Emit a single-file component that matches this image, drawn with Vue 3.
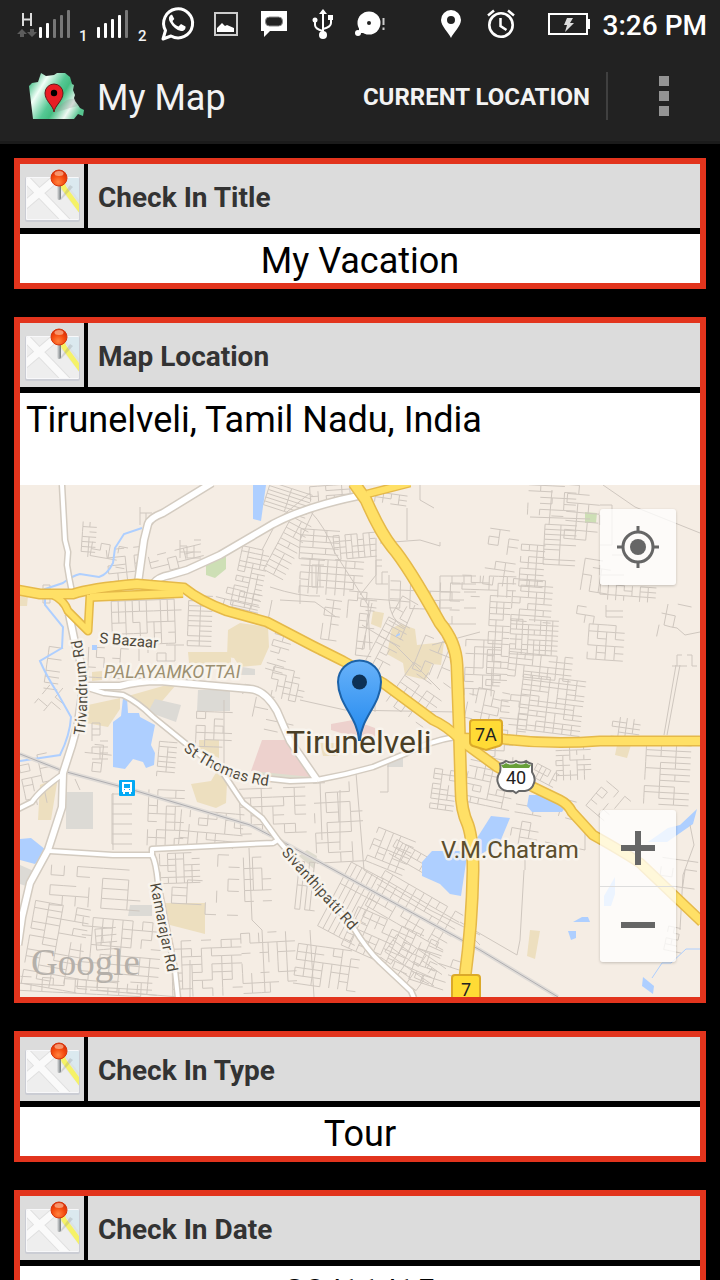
<script setup>
import { ref } from 'vue'

const records = ref([
  { title: 'Check In Title', value: 'My Vacation' },
  { title: 'Map Location', value: 'Tirunelveli, Tamil Nadu, India', map: true },
  { title: 'Check In Type', value: 'Tour' },
  { title: 'Check In Date', value: '28/11/15' }
])

// Minor street blocks: [x, y, width, height, rotation, column step, row step, density]
const blocks = [
  [82, 522, 16, 34, 4, 7, 5, 0.6], [90, 545, 40, 26, 10, 9, 7, 0.4], [140, 507, 12, 22, 0, 6, 6, 0.6],
  [108, 548, 38, 34, -6, 9, 8, 0.5], [150, 550, 55, 20, -14, 9, 6, 0.55], [180, 540, 22, 20, 0, 7, 6, 0.5],
  [112, 600, 75, 50, -2, 7, 11, 0.7], [188, 596, 24, 52, 2, 12, 5, 0.85], [130, 645, 60, 22, 0, 9, 8, 0.5],
  [236, 548, 28, 62, 12, 7, 5, 0.75], [216, 590, 44, 18, 14, 9, 6, 0.6], [46, 648, 26, 46, 8, 14, 6, 0.65],
  [36, 585, 22, 18, 0, 7, 6, 0.4], [92, 723, 18, 38, 0, 8, 6, 0.6], [40, 684, 24, 34, 40, 12, 6, 0.4],
  [88, 648, 40, 30, 3, 8, 10, 0.5], [196, 712, 40, 40, 2, 9, 7, 0.55], [158, 742, 18, 34, 5, 9, 5, 0.8],
  [266, 488, 44, 24, 18, 22, 4, 0.9], [310, 485, 50, 14, -4, 8, 5, 0.6], [276, 520, 30, 60, 28, 11, 6, 0.75],
  [300, 530, 38, 30, 4, 13, 6, 0.85], [334, 534, 42, 25, -5, 6, 6, 0.75], [300, 560, 62, 34, 4, 9, 7, 0.8],
  [312, 565, 14, 22, 0, 4, 22, 1], [322, 600, 16, 58, 8, 8, 8, 0.7], [348, 592, 26, 26, 5, 9, 9, 0.5],
  [358, 600, 16, 60, 6, 8, 7, 0.65], [373, 620, 28, 60, 28, 8, 7, 0.65], [390, 582, 70, 34, 2, 10, 9, 0.5],
  [440, 576, 42, 48, 0, 12, 8, 0.55], [376, 560, 12, 24, 0, 6, 6, 0.5], [394, 600, 24, 28, 30, 9, 7, 0.5],
  [270, 630, 22, 46, 16, 9, 6, 0.5], [270, 670, 36, 34, 12, 7, 6, 0.6], [395, 672, 50, 50, 35, 9, 8, 0.5],
  [416, 640, 35, 45, 22, 9, 12, 0.35], [375, 494, 34, 10, 8, 8, 5, 0.6], [240, 690, 60, 40, 12, 14, 10, 0.3],
  [528, 486, 52, 34, 3, 12, 6, 0.4], [566, 486, 38, 56, 5, 11, 9, 0.45], [486, 530, 30, 60, 8, 10, 8, 0.4],
  [544, 525, 32, 40, 3, 16, 5, 0.8], [520, 545, 28, 45, 4, 8, 6, 0.75], [462, 576, 54, 24, 2, 9, 7, 0.55],
  [488, 596, 20, 90, 3, 7, 6, 0.75], [512, 580, 44, 44, 4, 8, 6, 0.7], [510, 620, 48, 36, 3, 6, 5, 0.75],
  [465, 640, 38, 55, 2, 9, 7, 0.6], [508, 655, 70, 26, 6, 8, 6, 0.75], [520, 678, 66, 56, 7, 9, 5, 0.8],
  [588, 625, 36, 36, 4, 9, 7, 0.7], [580, 560, 28, 65, 9, 9, 8, 0.35], [600, 586, 55, 14, 4, 8, 5, 0.7],
  [606, 605, 18, 14, 0, 17, 6, 0.9], [612, 718, 28, 20, 8, 7, 5, 0.65], [466, 690, 44, 44, 12, 8, 8, 0.55],
  [500, 695, 30, 45, 5, 9, 6, 0.6], [672, 655, 28, 11, 0, 5, 11, 0.6], [660, 605, 40, 35, 12, 14, 12, 0.25],
  [22, 755, 34, 48, -12, 10, 7, 0.55], [84, 745, 32, 30, 6, 9, 9, 0.4], [112, 794, 34, 60, 0, 20, 10, 0.8],
  [148, 790, 38, 55, 2, 9, 8, 0.65], [180, 812, 62, 34, 5, 9, 7, 0.65], [160, 853, 42, 34, -2, 8, 6, 0.65],
  [50, 868, 96, 44, 4, 13, 10, 0.55], [28, 905, 60, 84, 10, 14, 7, 0.7], [80, 920, 80, 74, 5, 10, 9, 0.65],
  [96, 928, 26, 26, -5, 7, 7, 0.7], [172, 940, 76, 55, -2, 10, 8, 0.6], [172, 880, 34, 24, 3, 15, 8, 0.6],
  [206, 855, 40, 60, 2, 11, 12, 0.3], [20, 980, 140, 16, 3, 11, 7, 0.65], [240, 788, 72, 50, -2, 11, 9, 0.6],
  [315, 782, 48, 80, -3, 12, 10, 0.6], [244, 846, 34, 60, -2, 9, 11, 0.5], [296, 862, 22, 70, 6, 5, 24, 0.85],
  [330, 868, 45, 80, 28, 6, 24, 0.8], [370, 834, 44, 38, 22, 8, 6, 0.7], [386, 858, 80, 22, 30, 7, 8, 0.7],
  [368, 890, 90, 45, 30, 9, 8, 0.8], [345, 925, 100, 44, 24, 8, 7, 0.65], [380, 948, 60, 40, 35, 12, 7, 0.55],
  [242, 932, 60, 60, -3, 9, 10, 0.45], [295, 948, 70, 46, 8, 9, 8, 0.6], [432, 770, 28, 40, 8, 8, 5, 0.65],
  [412, 955, 48, 36, 18, 12, 8, 0.45], [466, 758, 48, 52, 12, 8, 6, 0.65], [556, 745, 38, 34, -2, 7, 5, 0.7],
  [590, 788, 36, 38, 40, 8, 8, 0.6], [645, 745, 55, 60, 3, 15, 6, 0.75], [512, 806, 28, 44, 10, 9, 8, 0.5],
  [666, 928, 22, 24, 12, 6, 6, 0.6], [660, 860, 40, 34, 8, 12, 9, 0.4], [532, 768, 24, 18, 28, 5, 7, 0.7],
  [560, 800, 14, 22, 15, 7, 6, 0.5], [486, 745, 40, 20, 2, 9, 6, 0.4], [600, 505, 24, 70, 0, 12, 10, 0.2]
]

function streetPath([x, y, w, h, deg, sx, sy, density], index) {
  let seed = index * 7919 + 17
  const rand = () => {
    seed = (seed * 16807 + 11) % 2147483647
    return seed / 2147483647
  }
  for (let i = 0; i < 4; i++) rand()
  const fill = density + 0.08
  const a = (deg * Math.PI) / 180
  const cx = x + w / 2
  const cy = y + h / 2
  const pt = (px, py) => {
    const dx = px - cx
    const dy = py - cy
    return `${(cx + dx * Math.cos(a) - dy * Math.sin(a)).toFixed(1)} ${(cy + dx * Math.sin(a) + dy * Math.cos(a)).toFixed(1)}`
  }
  let d = ''
  for (let py = y; py <= y + h; py += sy) {
    for (let px = x; px + sx <= x + w + 1; px += sx) {
      if (rand() < fill) d += `M${pt(px, py)}L${pt(px + sx, py)}`
      if (py + sy <= y + h + 1 && rand() < fill) d += `M${pt(px, py)}L${pt(px, py + sy)}`
    }
  }
  return d
}

const minorStreets = blocks.map(streetPath).join('')

const whiteRoads = [
  { w: 4, d: 'M62 485L65 540L68 552L67 565L69 577L72 592' },
  { w: 6, d: 'M69 614L75 643L82 667L83 687L78 723L72 745L63 773L62 807L48 850L30 883L22 917L18 945' },
  { w: 6, d: 'M212 483L163 513Q150 518 148 524L144 540L138 583' },
  { w: 6, d: 'M153 584Q158 577 170 575L187 570L220 555L273 524Q305 507 358 496' },
  { w: 6, d: 'M86 686L120 686Q138 681 160 681L193 684L250 689Q265 690 277 711L290 741L317 780' },
  { w: 4, d: 'M317 780Q345 775 373 767L407 753Q430 741 455 737' },
  { w: 4, d: 'M317 780L290 781L262 778' },
  { w: 4, d: 'M88 688L104 693L123 695Q138 702 153 717L190 747L223 773L243 803L262 818L278 840L353 927Q367 950 380 962L411 991L414 998' },
  { w: 4, d: 'M50 851L113 855L152 855L152 849L250 844L273 843L278 840' },
  { w: 4, d: 'M152 855Q156 862 158 883L175 970L178 998' },
  { w: 4, d: 'M18 809L32 802Q40 790 63 774' }
]

const yellowRoads = [
  { w: 7, d: 'M90 597L183 593' },
  { w: 6, d: 'M53 595Q64 600 68 611L88 631L90 595' },
  { w: 8, d: 'M18 590L40 594L73 594Q90 588 137 584L184 588Q200 601 227 611L267 622L313 646L343 661L383 683L433 720Q445 725 460 739' },
  { w: 6, d: 'M367 494L410 483' },
  { w: 10, d: 'M354 483L366 500Q380 532 392 547Q407 564 440 623Q456 642 457 665L459 720L461 790Q461 810 468 825Q473 840 473 870Q472 925 465 977' },
  { w: 8, d: 'M460 738L503 739Q550 745 600 741L702 741' },
  { w: 8, d: 'M460 740L497 767L533 787L560 800Q568 804 572 812L593 835Q620 850 640 863L702 922' }
]
</script>

<template>
  <div class="app">
    <header class="top">
      <div class="status">
        <div class="signal">
          <svg width="54" height="30" viewBox="16 9 54 30">
            <g fill="#5c5c5c"><path d="M17 34l5-5 5 5h-3v3h-4v-3zM27 32l5 5 5-5h-3v-3h-4v3z" /></g>
            <path d="M23 13v13M31 13v13M23 19.500h8" stroke="#ddd" stroke-width="2" fill="none" />
            <g fill="#fff"><rect x="39" y="27" width="3" height="11" rx="1" /><rect x="46" y="23" width="3" height="15" rx="1" /></g>
            <g fill="#777"><rect x="53" y="19" width="3" height="19" rx="1" /><rect x="60" y="15" width="3" height="23" rx="1" /><rect x="67" y="10" width="3" height="28" rx="1" /></g>
          </svg>
          <span class="sim">1</span>
          <svg width="32" height="30" viewBox="97 9 32 30">
            <g fill="#fff"><rect x="97" y="27" width="3" height="11" rx="1" /><rect x="104" y="23" width="3" height="15" rx="1" /><rect x="111" y="19" width="3" height="19" rx="1" /><rect x="118" y="15" width="3" height="23" rx="1" /></g>
            <rect x="125" y="10" width="3" height="28" rx="1" fill="#777" />
          </svg>
          <span class="sim">2</span>
        </div>
        <div class="notices">
          <svg width="48" height="48" viewBox="155 1 48 48">
            <path d="M164 40l2.500-8.500a14.500 14.500 0 1 1 5.500 5.500z" fill="none" stroke="#fff" stroke-width="3" stroke-linejoin="round" />
            <path d="M173 15.500c-3 1-4 4-2 7.500 3 5 6.500 8 11 9 2.500.500 5-1.500 4.500-4.500l-4.500-2.500-2.500 2.500c-3-1-5-3.200-6-5.500l1.800-2z" fill="#fff" />
          </svg>
          <svg width="48" height="48" viewBox="202 0 48 48">
            <rect x="215" y="13" width="22" height="22" fill="none" stroke="#ccc" stroke-width="2" />
            <path d="M217 32v-4l5-5 3 3 2-1 7 3v4z" fill="#fff" />
          </svg>
          <svg width="48" height="48" viewBox="250 0 48 48">
            <path d="M261 11h26v20h-17l-6 6v-6h-3z" fill="#fff" /><rect x="265.500" y="17" width="17" height="9" rx="4" fill="#222" stroke="#888" />
          </svg>
          <svg width="48" height="48" viewBox="298 0 48 48">
            <path d="M323 13v22M315 21v4q0 4 8 6M331 19v4q0 4-8 6" fill="none" stroke="#fff" stroke-width="2" />
            <path d="M319 14l4-5 4 5z" fill="#fff" /><circle cx="323" cy="35" r="4" fill="#fff" /><circle cx="315" cy="20" r="2.500" fill="#fff" /><rect x="328" y="15" width="5" height="5" fill="#fff" />
          </svg>
          <svg width="48" height="48" viewBox="346 0 48 48">
            <circle cx="369" cy="23" r="11.500" fill="#fff" /><circle cx="369" cy="23" r="2" fill="#222" />
            <path d="M360 27v5h7" fill="none" stroke="#fff" stroke-width="2" /><circle cx="358" cy="33" r="3" fill="#fff" />
            <path d="M383.500 18v7M383.500 27.500v2.500" stroke="#ccc" stroke-width="2" />
          </svg>
        </div>
        <div class="system">
          <svg width="48" height="48" viewBox="429 0 48 48">
            <path fill-rule="evenodd" d="M451 38c-2-5-10-12-10-18a10 10 0 0 1 20 0c0 6-8 13-10 18zM451 16a4 4 0 1 0 0 8 4 4 0 0 0 0-8z" fill="#fff" />
          </svg>
          <svg width="48" height="48" viewBox="477 0 48 48">
            <circle cx="501" cy="25" r="11.700" fill="none" stroke="#fff" stroke-width="2.600" />
            <path d="M500.500 18v8l6 4M488 15.500l6-5M514 15.500l-6-5" fill="none" stroke="#fff" stroke-width="2.500" />
          </svg>
          <svg class="battery" width="42" height="48" viewBox="548 0 42 48">
            <rect x="549" y="14" width="38" height="20" fill="none" stroke="#fff" stroke-width="2" /><path d="M588 19h2v10h-2z" fill="#fff" />
            <path d="M567 18h6l-3 5h4l-9 9 2-7h-3z" fill="#ddd" />
          </svg>
          <time class="clock">3:26 PM</time>
        </div>
      </div>

      <div class="actionbar">
        <svg class="logo" width="56" height="50" viewBox="28 71 56 50">
          <defs>
            <linearGradient id="land" x1="0" y1="0.200" x2="1" y2="0.700">
              <stop offset="0" stop-color="#3fbd83" /><stop offset="0.220" stop-color="#f2fff8" /><stop offset="0.480" stop-color="#55c894" /><stop offset="0.600" stop-color="#43bd82" /><stop offset="0.820" stop-color="#eef8f2" /><stop offset="1" stop-color="#57c590" />
            </linearGradient>
          </defs>
          <path d="M29 86l3-3 6-1 3-9 5 3 8-1 3-2 8 0 5 4 2 7 2 1-1 5 2 5-1 3 1 3 3 4 2 3 4 2-1 6-5-2-4 5H33z" fill="url(#land)" />
          <path d="M54 113c9-13 16-15 21-14l3 7-8 2z" fill="#888" opacity="0.250" />
          <path d="M54 112c-1-7-9-11-9-19a9 9 0 0 1 18 0c0 8-8 12-9 19z" fill="#e91d25" stroke="#6b1518" stroke-width="1" /><circle cx="54" cy="93" r="3.200" />
        </svg>
        <h1>My Map</h1>
        <button class="current" type="button">CURRENT LOCATION</button>
        <button class="more" type="button" aria-label="More options">
          <svg width="10" height="40" viewBox="0 0 10 40" fill="#949494"><path d="M0 0h10v10H0zM0 15h10v10H0zM0 30h10v10H0z" /></svg>
        </button>
      </div>
    </header>

    <main class="list">
      <section v-for="record in records" :key="record.title" class="card">
        <div class="card-head">
          <div class="thumb">
            <svg width="64" height="64" viewBox="20 164 64 64">
              <defs>
                <clipPath id="sheet"><rect x="27" y="178" width="52" height="41" rx="1" /></clipPath>
                <radialGradient id="ball" cx="0.450" cy="0.750" r="0.700"><stop offset="0" stop-color="#ff8340" /><stop offset="0.550" stop-color="#f54d10" /><stop offset="1" stop-color="#d92e08" /></radialGradient>
                <linearGradient id="stick"><stop offset="0" stop-color="#e8e8e8" /><stop offset="1" stop-color="#6c7478" /></linearGradient>
              </defs>
              <rect x="25" y="177" width="55" height="45" rx="2" fill="#cbcdd4" />
              <rect x="26" y="177" width="53" height="43" rx="1" fill="#f8f8fa" />
              <g clip-path="url(#sheet)">
                <rect x="27" y="178" width="52" height="41" fill="#eee" />
                <path d="M61 178h20v29z" fill="#dbe9ef" />
                <path d="M24 206l36-31M26 179l46 48" stroke="#e0e0e0" stroke-width="9" fill="none" />
                <path d="M24 206l36-31M25 178l46 48" stroke="#fafafa" stroke-width="7" fill="none" />
                <path d="M60 175L64 187L82 210" stroke="#dcdcdc" stroke-width="8" fill="none" opacity="0.500" />
                <path d="M60 177L64 188L81 211" stroke="#f5f267" stroke-width="5" fill="none" />
              </g>
              <path d="M60 199l10-14 3 2-12 13z" fill="#777" opacity="0.220" />
              <rect x="57" y="184" width="4" height="16" rx="2" fill="url(#stick)" />
              <circle cx="59" cy="178" r="8" fill="url(#ball)" stroke="#d8360c" stroke-width="1" />
              <ellipse cx="59" cy="173.500" rx="4.500" ry="2.500" fill="#ffc3a0" opacity="0.650" />
            </svg>
          </div>
          <h2>{{ record.title }}</h2>
        </div>
        <p class="value" :class="{ place: record.map }">{{ record.value }}</p>

        <div v-if="record.map" class="map">
          <svg class="map-art" viewBox="20 485 680 512" preserveAspectRatio="xMidYMid slice">
            <defs>
              <linearGradient id="marker" x1="0" y1="0" x2="0" y2="1"><stop offset="0" stop-color="#68b2fa" /><stop offset="1" stop-color="#2088ee" /></linearGradient>
              <path id="trivandrum" d="M84 736Q92 690 80 632" />
              <path id="thomas" d="M183 750Q226 784 280 787" />
              <path id="sivanthi" d="M281 853L366 948" />
              <path id="kamarajar" d="M150 884L171 990" />
            </defs>
            <rect x="20" y="485" width="680" height="512" fill="#f5ede4" />

            <g fill="#eddfbf">
              <path d="M20 596h8l-1 10h-7z" /><path d="M228 630l12-7 28 4 1 20-8 18-21 2-6-9-7-1z" /><path d="M188 652h40l3 6v8l-42-3z" />
              <path d="M88 705l32-7v11l-12 18-22-4z" /><path d="M128 696l35-10 12 0-18 21-10 5z" /><path d="M92 672l10-1v9l-10 1z" />
              <path d="M373 611l11 2-3 15-10-4z" /><path d="M392 628l9-4 14 5 2 16 27-3-3 23-9-1-6 16-21-5-2-12-16-9z" />
              <path d="M40 785l18-8-7 43-13 0z" /><path d="M191 784l20-3 6-10 10 12-1 20-10 5-19-6z" /><path d="M165 903l40 0v31l-35-9z" />
              <path d="M617 745h14l-4 13-12-3z" /><path d="M530 930l10 1-5 28-8-3z" /><path d="M320 743h18v13h-15z" /><path d="M199 740h20v18l-20-9z" />
            </g>
            <g fill="#dcdad5">
              <path d="M198 690h32v21h-33z" /><path d="M155 699l26 6-5 17-28-10z" /><path d="M66 792h27v37H66z" /><path d="M130 905h22v11h-24z" />
              <path d="M390 758h13v9h-16z" /><path d="M20 865l16 7-7 15-9-3z" /><path d="M242 667l13 2v6h-15z" />
            </g>
            <path d="M307 850l10 6-3 13-15-13z" fill="#dedbce" />
            <path d="M257 770l50 5 8 4-60-1z" fill="#deddce" />
            <g fill="#edd1cd"><path d="M262 740l27 0 22 37-60-6z" /><path d="M331 724l22-4 22 8 0 10-34-5-10-3z" /></g>
            <g fill="#cddfb5"><path d="M206 565l20-9v13l-11 9-9-3z" /><path d="M585 512l12 1-1 10-11 0z" /></g>

            <path :d="minorStreets" class="minor" />

            <g fill="#aecfff">
              <path d="M253 485h13l-5 36-8-2z" /><path d="M123 698h4l1 15h11l1 4 15 8-4 20 4 8-1 12-8 3-3-6-10-3-8 10-12-2v-45l8-6z" />
              <path d="M20 839l11-1 15 12-11 14-15-4z" /><path d="M422 862l10-11h28l7 5-6 40-11-2-10-10-18-8z" />
              <path d="M477 838l14-22 19 2-10 24-23 15z" /><path d="M529 795l10 0 27 11-4 6h-30l-5-6z" />
              <path d="M648 842l20-14 12-3 17-16-4 15-26 18z" /><path d="M604 896l11-19v17l-4 12h-7z" /><path d="M573 922l9-5h6l2 5z" />
              <path d="M568 931h8v7l-5 2z" /><path d="M643 977l11 9-1 8-11-8z" /><path d="M92 645h5v5h-5z" /><path d="M396 635l4-2v2l-4 2z" />
            </g>
            <path d="M142 528L124 534L115 548L113 563Q107 575 99 577L80 574Q72 576 63 583L45 589L45 605L63 627L62 648L40 661Q46 675 58 694L71 717Q70 735 60 755L20 761" fill="none" stroke="#aecfff" stroke-width="2" />
            <path d="M652 978L662 963L671 963L686 949H700" fill="none" stroke="#aecfff" stroke-width="1" />

            <g class="minor">
              <path d="M310 511Q325 526 335 553L368 605L370 650M300 540L315 508M376 538L376 575L360 595M407 508V540M380 543L420 540L440 546L440 542M280 600L315 602L336 617M420 485V500L434 508M358 598Q390 600 410 602M389 575V600Q390 620 405 628" />
              <path d="M603 485L635 507L700 533M668 604L664 625Q670 627 677 628L685 635L700 632M676 665L664 735M680 665L667 735M552 490L549 525M530 517L590 519M310 493L265 530" />
              <path d="M524 870L520 940L517 955L460 922M585 830V850L545 842M525 845V870M388 760V792H380M356 773L364 870L430 910L480 935M690 825L694 845L683 875L680 930" />
              <path d="M262 550L275 525M270 587Q300 597 320 596M300 580V604M272 600L268 620M320 782L322 840M340 790V850M224 700V775M113 793V850M75 779L80 790" />
              <path d="M300 700L345 710L458 712M375 700V712M372 603L362 650M362 625L395 645L440 690M415 605L400 640M432 645L480 632" />
              <path d="M249 848L252 920L262 930L265 992M190 960V997M310 930L314 997M480 945L465 930M90 990L180 997" />
            </g>

            <g fill="none"><path d="M20 754L63 771L133 790L250 825L283 842L480 950L558 997" stroke="#dfdbd7" stroke-width="4" /><path d="M20 754L63 771L133 790L250 825L283 842L480 950L558 997" stroke="#aeadb0" stroke-width="1" /></g>

            <g fill="none" stroke-linejoin="round">
              <path v-for="road in whiteRoads" :key="'c' + road.d" :d="road.d" stroke="#d3cbc0" :stroke-width="road.w + 3" />
              <path v-for="road in whiteRoads" :key="road.d" :d="road.d" stroke="#fff" :stroke-width="road.w" />
              <path v-for="road in yellowRoads" :key="'c' + road.d" :d="road.d" stroke="#e5b949" :stroke-width="road.w + 3" />
              <path v-for="road in yellowRoads" :key="road.d" :d="road.d" stroke="#ffe066" :stroke-width="road.w" />
            </g>

            <g>
              <rect x="119" y="780" width="16" height="16" rx="1" fill="#03a9f4" />
              <path d="M123 783h8v8h-8z" fill="#03a9f4" stroke="#fff" stroke-width="2" /><path d="M122 788h10v3h-10zM123 792h2v2h-2zM129 792h2v2h-2z" fill="#fff" /><path d="M124 789h1v1h-1zM129 789h1v1h-1z" fill="#03a9f4" />
              <path d="M473 720h26q3 0 3 3v19q0 3-3 4l-13 4-13-4q-3-1-3-4v-19q0-3 3-3z" fill="#ffdb35" stroke="#dba929" stroke-width="2" />
              <path d="M455 975h22q3 0 3 3v20h-28v-20q0-3 3-3z" fill="#ffdb35" stroke="#dba929" stroke-width="2" />
              <path d="M500 764q4-1 6-3 5 3 10 0 5 3 10 0 2 2 6 3 0 3 0 8 4 6 2 11-2 7-9 8l-6 0-3 2-3-2-6 0q-7-1-9-8-2-5 2-11 1-5 0-8z" fill="#fff" stroke="#686868" stroke-width="2" />
              <path d="M501 765q3 0 5-2 5 3 10 0 5 3 10 0 2 2 5 2l-2 3h-26z" fill="#679f39" />
            </g>
            <g class="shield"><text x="475" y="741">7A</text><text x="506" y="784">40</text><text x="461" y="996">7</text></g>

            <text class="google" x="31" y="975">Google</text>
            <g class="road">
              <text x="99" y="643" transform="rotate(5 99 643)">S Bazaar</text>
              <text><textPath href="#trivandrum">Trivandrum Rd</textPath></text>
              <text><textPath href="#thomas">St Thomas Rd</textPath></text>
              <text><textPath href="#sivanthi">Sivanthipatti Rd</textPath></text>
              <text><textPath href="#kamarajar">Kamarajar Rd</textPath></text>
            </g>
            <text class="district" x="104" y="678">PALAYAMKOTTAI</text>
            <text class="town" x="441" y="858">V.M.Chatram</text>
            <text class="city" x="286" y="753">Tirunelveli</text>

            <path d="M359 740C358 718 338 704 338 682a21.500 21.500 0 0 1 43 0C381 704 361 718 360 740z" fill="url(#marker)" stroke="#1c62a8" stroke-width="2" />
            <circle cx="359.500" cy="682" r="7.500" fill="#0d3156" />
          </svg>

          <button class="control locate" type="button" aria-label="My location">
            <svg width="42" height="42" viewBox="0 0 42 42"><circle cx="21" cy="21" r="15" fill="none" stroke="#666" stroke-width="3" /><circle cx="21" cy="21" r="8" fill="#666" /><path d="M21 0v6M21 36v6M0 21h6M36 21h6" stroke="#666" stroke-width="3" /></svg>
          </button>
          <div class="control zoom">
            <button type="button" aria-label="Zoom in"><svg width="34" height="34" viewBox="0 0 34 34"><path d="M14 0h6v14h14v6H20v14h-6V20H0v-6h14z" fill="#666" /></svg></button>
            <button type="button" aria-label="Zoom out"><svg width="34" height="34" viewBox="0 0 34 34"><path d="M0 14h34v6H0z" fill="#666" /></svg></button>
          </div>
        </div>
      </section>
    </main>
  </div>
</template>

<style>
body {
  background: #000;
}
</style>

<style scoped>
.app {
  height: 100vh;
  display: flex;
  flex-direction: column;
  overflow: hidden;
  background: #000;
  font-family: Roboto, "Liberation Sans", sans-serif;
}
svg {
  display: block;
  flex: none;
}
button {
  border: 0;
  padding: 0;
  background: none;
  font: inherit;
  color: inherit;
}
h1, h2, p {
  margin: 0;
}
.top {
  flex: none;
  background: #222;
  color: #f3f3f3;
  border-bottom: 3px solid #1b1b1b;
}
.status {
  display: flex;
  align-items: center;
  height: 48px;
  padding: 0 13px 0 16px;
}
.signal {
  display: flex;
  align-items: flex-end;
  gap: 9px;
  width: 138px;
}
.sim {
  font-size: 15px;
  line-height: 6px;
  font-weight: 500;
  width: 9px;
}
.notices, .system {
  display: flex;
  align-items: center;
}
.system {
  margin-left: auto;
}
.battery {
  margin: 0 13px 0 23px;
}
.clock {
  padding-top: 4px;
  font-size: 28px;
  line-height: 44px;
  font-weight: 500;
  color: #fff;
  white-space: nowrap;
}
.actionbar {
  display: flex;
  align-items: center;
  height: 93px;
  padding: 2px 0 0 28px;
  box-sizing: border-box;
}
h1 {
  margin-left: 13px;
  padding-top: 4px;
  font-size: 36px;
  line-height: 48px;
  font-weight: 400;
}
.current {
  margin-left: auto;
  padding: 2px 16px 0 0;
  height: 48px;
  border-right: 2px solid #404040;
  font-size: 24px;
  font-weight: 700;
  white-space: nowrap;
}
.more {
  width: 112px;
  height: 48px;
  display: grid;
  place-items: center;
}
.list {
  flex: 1;
  min-height: 0;
  overflow-y: auto;
  scrollbar-width: none;
  padding: 14px;
  display: flex;
  flex-direction: column;
  gap: 28px;
}
.card {
  flex: none;
  border: 6px solid #e2341d;
  background: #fff;
}
.card-head {
  display: flex;
  gap: 4px;
  background: #000;
  border-bottom: 6px solid #000;
}
.thumb {
  background: #dcdcdc;
}
h2 {
  flex: 1;
  padding: 4px 0 0 10px;
  background: #dcdcdc;
  color: #333;
  font-size: 28px;
  line-height: 60px;
  font-weight: 700;
}
.value {
  padding: 6px 6px 1px;
  font-size: 36px;
  line-height: 42px;
  text-align: center;
  color: #000;
}
.place {
  text-align: left;
  padding-bottom: 44px;
}
.map {
  position: relative;
  height: 512px;
}
.map-art {
  width: 100%;
  height: 100%;
}
.map-art text {
  font-family: Roboto, "Liberation Sans", sans-serif;
  paint-order: stroke;
  stroke: rgba(250, 246, 240, 0.8);
  stroke-width: 5px;
  stroke-linejoin: round;
}
.minor {
  fill: none;
  stroke: #cfc7bf;
  stroke-width: 1;
}
.road text {
  font-size: 15px;
  fill: #4d483a;
}
.map-art .district {
  font-size: 18px;
  font-style: italic;
  fill: #9c9071;
}
.map-art .town {
  font-size: 24px;
  fill: #5c4e2c;
}
.map-art .city {
  font-size: 32px;
  fill: #493e26;
}
.map-art .shield text {
  font-size: 18px;
  fill: #222;
  stroke: none;
}
.map-art .google {
  font-family: "Liberation Serif", serif;
  font-size: 37px;
  fill: #b5b0aa;
  stroke: none;
}
.control {
  position: absolute;
  right: 24px;
  width: 76px;
  border-radius: 3px;
  background: rgba(255, 255, 255, 0.76);
  box-shadow: 0 1px 3px rgba(0, 0, 0, 0.2);
}
.locate {
  top: 24px;
  height: 76px;
  display: grid;
  place-items: center;
}
.zoom {
  bottom: 35px;
}
.zoom button {
  width: 100%;
  height: 76px;
  display: grid;
  place-items: center;
}
.zoom button + button {
  border-top: 1px solid #ddd;
}
</style>
